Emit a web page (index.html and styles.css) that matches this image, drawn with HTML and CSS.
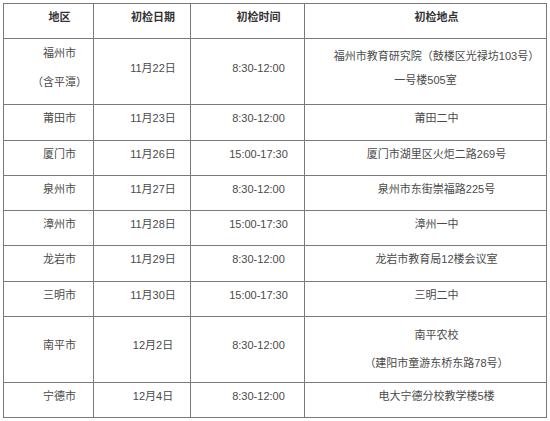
FILE: index.html
```html
<!DOCTYPE html>
<html lang="zh-CN">
<head>
<meta charset="utf-8">
<title>初检安排</title>
<link rel="stylesheet" href="styles.css">
</head>
<body>
<table class="schedule">
  <colgroup>
    <col class="c-area">
    <col class="c-date">
    <col class="c-time">
    <col class="c-place">
  </colgroup>
  <thead>
    <tr>
      <th>地区</th>
      <th>初检日期</th>
      <th>初检时间</th>
      <th>初检地点</th>
    </tr>
  </thead>
  <tbody>
    <tr>
      <td class="pair"><p>福州市</p><p>（含平潭）</p></td>
      <td>11月22日</td>
      <td>8:30-12:00</td>
      <td class="wrap">福州市教育研究院（鼓楼区光禄坊103号）<br>一号楼505室</td>
    </tr>
    <tr>
      <td>莆田市</td>
      <td>11月23日</td>
      <td>8:30-12:00</td>
      <td>莆田二中</td>
    </tr>
    <tr>
      <td>厦门市</td>
      <td>11月26日</td>
      <td>15:00-17:30</td>
      <td>厦门市湖里区火炬二路269号</td>
    </tr>
    <tr>
      <td>泉州市</td>
      <td>11月27日</td>
      <td>8:30-12:00</td>
      <td>泉州市东街崇福路225号</td>
    </tr>
    <tr>
      <td>漳州市</td>
      <td>11月28日</td>
      <td>15:00-17:30</td>
      <td>漳州一中</td>
    </tr>
    <tr>
      <td>龙岩市</td>
      <td>11月29日</td>
      <td>8:30-12:00</td>
      <td>龙岩市教育局12楼会议室</td>
    </tr>
    <tr>
      <td>三明市</td>
      <td>11月30日</td>
      <td>15:00-17:30</td>
      <td>三明二中</td>
    </tr>
    <tr class="tall">
      <td>南平市</td>
      <td>12月2日</td>
      <td>8:30-12:00</td>
      <td class="stack"><p>南平农校</p><p>（建阳市童游东桥东路78号）</p></td>
    </tr>
    <tr>
      <td>宁德市</td>
      <td>12月4日</td>
      <td>8:30-12:00</td>
      <td>电大宁德分校教学楼5楼</td>
    </tr>
  </tbody>
</table>
</body>
</html>
```

FILE: styles.css
```css
html, body {
  margin: 0;
  padding: 0;
  background: #ffffff;
}

body {
  padding: 3px 0 0 3px;
  font-family: "Liberation Sans", "Noto Sans CJK SC", sans-serif;
  font-size: 11px;
  color: #4a4a4a;
}

.schedule {
  border-collapse: collapse;
  table-layout: fixed;
  width: 543px;
}

.c-area { width: 90px; }
.c-date { width: 97px; }
.c-time { width: 114px; }
.c-place { width: 242px; }

.schedule th,
.schedule td {
  border: 1px solid #7a7a7a;
  padding: 0 0 7px 0;
  line-height: 27.25px;
  text-align: center;
  text-indent: 2em;
  vertical-align: middle;
  white-space: nowrap;
}

.schedule th {
  font-weight: bold;
  color: #333333;
}

.schedule p {
  margin: 0;
}

.schedule td.pair {
  line-height: 29px;
}

.schedule td.wrap {
  line-height: 24px;
}

.schedule td.stack {
  line-height: 28px;
  padding: 4px 0 5px 0;
}

.schedule tr.tall td {
  height: 58px;
}

.schedule tr.tall td.stack {
  height: 56px;
}
```
